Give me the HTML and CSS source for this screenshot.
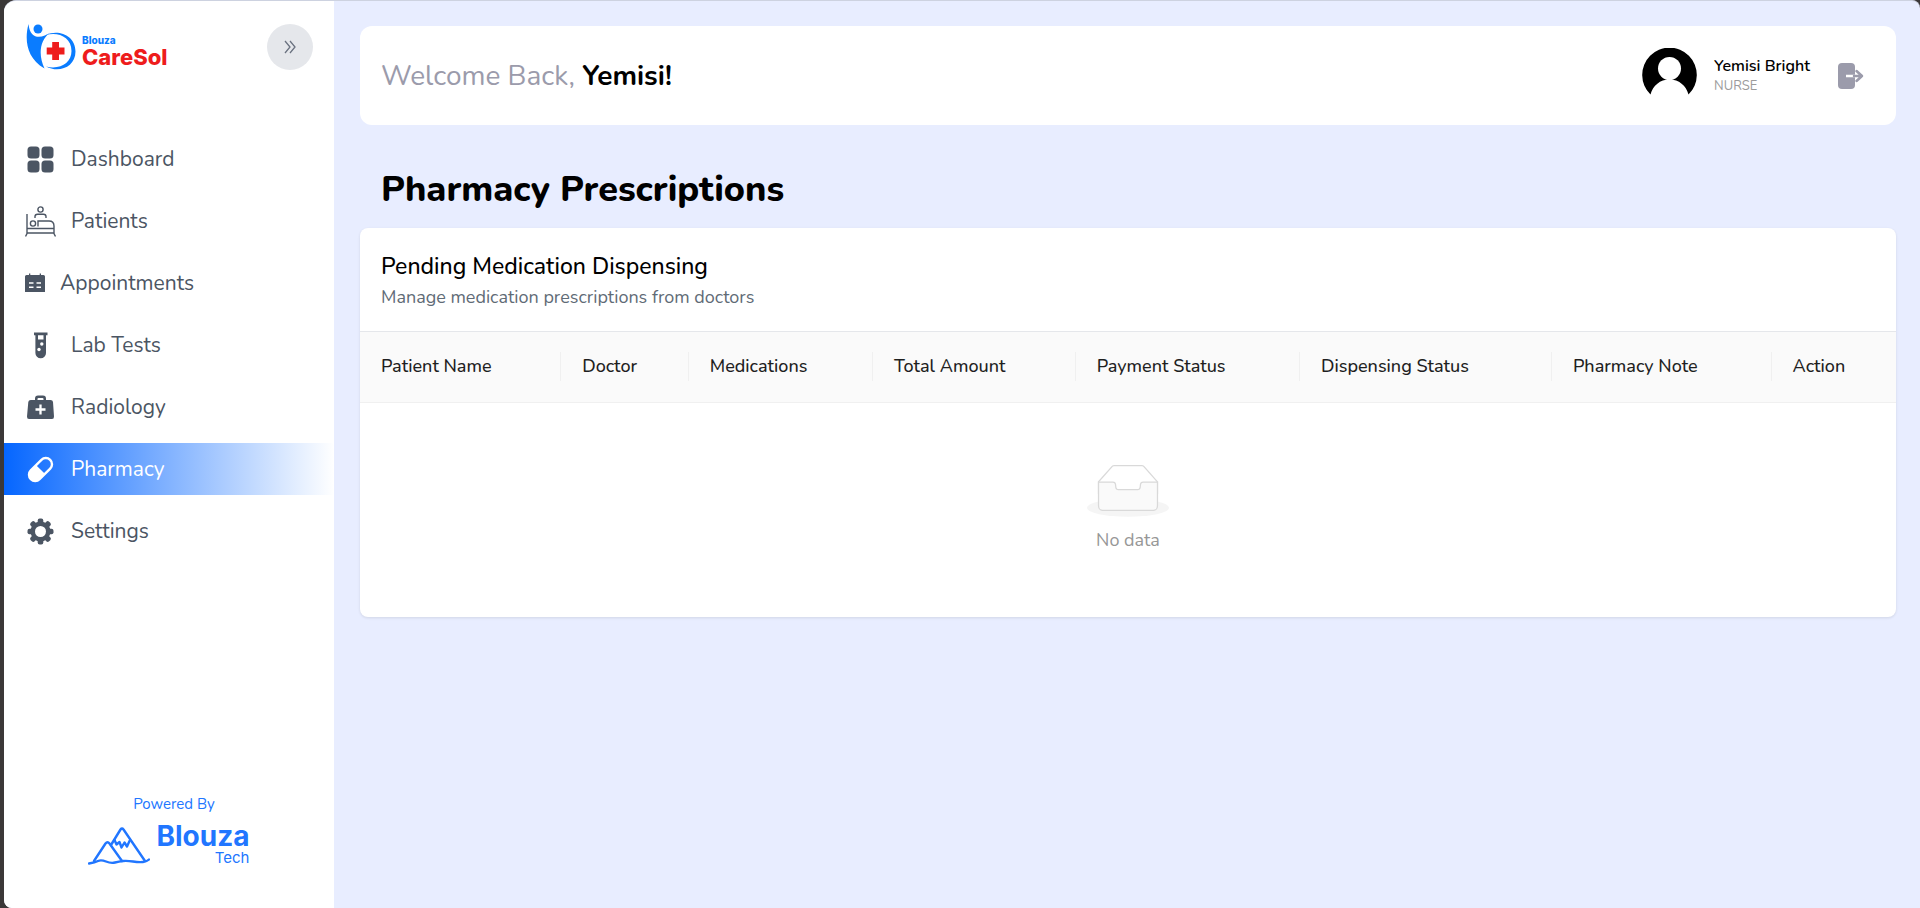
FILE: index.html
```
<!DOCTYPE html>
<html lang="en">
<head>
  <meta charset="UTF-8" />
  <meta name="viewport" content="width=device-width, initial-scale=1.0" />
  <title>Pharmacy | Blouza CareSol</title>
  <link rel="stylesheet" href="styles.css">
</head>
<body>
  <div class="app">

    <aside class="sidebar">
      <div class="sidebar-top">
        <a class="brand" href="#">
          <svg class="brand-icon" viewBox="0 0 50 46">
            <circle cx="12" cy="5" r="4.500" fill="#0a7cff"/>
            <path fill="#0a7cff" d="M2.500 0C-1.500 15 0 34 18.500 44.500C12.500 32 13 17 24 8.500C17 14 4 17 2.500 0Z"/>
            <path fill="#0a7cff" d="M20 11C32 5 49.500 11 49.500 27.500C49.500 43 33 49.500 20 42.500C34 46 45.500 39 45.500 27C45.500 13 32 7.500 20 11Z"/>
            <path fill="#ee1c1c" d="M26.200 18h6.800v5.600h5.500v6.800h-5.500v5.600h-6.800v-5.600h-5.500v-6.800h5.500z"/>
          </svg>
          <span class="brand-text">
            <span class="brand-small">Blouza</span>
            <span class="brand-big">CareSol</span>
          </span>
        </a>
        <button class="collapse-btn" type="button" aria-label="Toggle sidebar">
          <svg width="12" height="14" viewBox="0 0 12 14" fill="none" stroke="#6b7280" stroke-width="1.300">
            <path d="M1 1l5 6-5 6M6 1l5 6-5 6"/>
          </svg>
        </button>
      </div>

      <nav class="nav">
        <a class="nav-item" href="#">
          <svg class="nav-icon" viewBox="0 0 31 31" fill="currentColor">
            <rect x="2.500" y="2.500" width="12" height="12" rx="3.500"/>
            <rect x="16.500" y="2.500" width="12" height="12" rx="3.500"/>
            <rect x="2.500" y="16.500" width="12" height="12" rx="3.500"/>
            <rect x="16.500" y="16.500" width="12" height="12" rx="3.500"/>
          </svg>
          <span>Dashboard</span>
        </a>
        <a class="nav-item" href="#">
          <svg class="nav-icon" viewBox="0 0 31 31" fill="none" stroke="currentColor" stroke-width="1.400">
            <circle cx="15.500" cy="3.500" r="2.600"/>
            <path d="M10 12V10.500C10 8.800 11 8.300 12.500 8.300h6c1.500 0 2.500.5 2.500 2.200V12"/>
            <circle cx="8" cy="17.500" r="2.600"/>
            <path d="M13 20.500v-5.500h11c3.500 0 5 2 5 5v7.500l1.500 3"/>
            <path d="M2 8v19.500L.5 30.500M2 22.500h27M2 27h27"/>
          </svg>
          <span>Patients</span>
        </a>
        <a class="nav-item" href="#">
          <svg class="nav-icon nav-icon-sm" viewBox="0 0 20 20">
            <path fill="currentColor" d="M4 .5h1.300V2h9.400V.5H16V2h2.500Q20 2 20 3.500V19H0V3.500Q0 2 1.500 2H4z"/>
            <path stroke="#fff" stroke-width="1.500" d="M4 10h4.500M11.500 10H16M4 14.300h4.500M11.500 14.300H16"/>
          </svg>
          <span>Appointments</span>
        </a>
        <a class="nav-item" href="#">
          <svg class="nav-icon" viewBox="0 0 31 31">
            <path fill="currentColor" fill-rule="evenodd" d="M9 2.500h13.500v2.700H21V23a5.300 5.300 0 0 1-10.600 0V5.200H9zM13 5.200v4.300h5.500V5.200z"/>
            <circle cx="16.800" cy="14" r="1.700" fill="#fff"/>
            <circle cx="14" cy="19.500" r="1.700" fill="#fff"/>
          </svg>
          <span>Lab Tests</span>
        </a>
        <a class="nav-item" href="#">
          <svg class="nav-icon" viewBox="0 0 31 31">
            <path fill="currentColor" fill-rule="evenodd" d="M10 8V6.500Q10 3.500 13 3.500h5q3 0 3 3V8h4.500q2.300 0 2.500 2l1 14.500q.1 2.500-2 2.500H4q-2.100 0-2-2.500L3.300 10q.2-2 2.500-2zM12.500 8h6V7q0-1-1-1h-4q-1 0-1 1z"/>
            <path stroke="#fff" stroke-width="2.300" d="M15.500 12.500v10M10.500 17.500h10"/>
          </svg>
          <span>Radiology</span>
        </a>
        <a class="nav-item active" href="#">
          <svg class="nav-icon" viewBox="0 0 31 31">
            <g transform="rotate(45 15.500 15.500)">
              <rect x="9.300" y="1.800" width="12.400" height="27.400" rx="6.200" fill="none" stroke="currentColor" stroke-width="2.400"/>
              <path fill="currentColor" d="M9 15.500h13v7a6.500 6.500 0 0 1-13 0z"/>
            </g>
          </svg>
          <span>Pharmacy</span>
        </a>
        <a class="nav-item" href="#">
          <svg class="nav-icon" viewBox="0 0 31 31">
            <g fill="currentColor">
              <rect x="12.700" y="2.500" width="5.600" height="26" rx="2"/>
              <rect x="12.700" y="2.500" width="5.600" height="26" rx="2" transform="rotate(45 15.500 15.500)"/>
              <rect x="12.700" y="2.500" width="5.600" height="26" rx="2" transform="rotate(90 15.500 15.500)"/>
              <rect x="12.700" y="2.500" width="5.600" height="26" rx="2" transform="rotate(135 15.500 15.500)"/>
              <circle cx="15.500" cy="15.500" r="10"/>
            </g>
            <circle cx="15.500" cy="15.500" r="5.500" fill="#fff"/>
          </svg>
          <span>Settings</span>
        </a>
      </nav>

      <div class="sidebar-footer">
        <p class="powered">Powered By</p>
        <a class="tech" href="#">
          <svg class="tech-icon" viewBox="0 0 62 38" fill="none" stroke="currentColor" stroke-width="2.400" stroke-linecap="round" stroke-linejoin="round">
            <path d="M1 36.500Q7 35.500 10 34t8 .5 9 1 8-1.500 10 .5 10 .5 6-2.500"/>
            <path d="M6 34L17.500 16.500q2-2.500 4 0L34 34"/>
            <path d="M23 18L32.500 2.500q1.500-2 3 0L57 34"/>
            <path d="M26.500 13l2 4.500 3-2.500 2 5.500 3-5 2.500 4 2.500-5.500"/>
          </svg>
          <span class="tech-text">
            <span class="tech-big">Blouza</span>
            <span class="tech-small">Tech</span>
          </span>
        </a>
      </div>
    </aside>

    <main class="main">
      <header class="topbar">
        <p class="welcome">Welcome Back, <strong>Yemisi!</strong></p>
        <div class="user">
          <svg class="avatar" viewBox="0 0 55 55">
            <path d="M8.500 46.500A27.300 27.300 0 1 1 46.500 46.500C44 37.500 37 31.500 27.500 31.500S11 37.500 8.500 46.500Z"/>
            <circle cx="27.500" cy="20.500" r="11.500" fill="#fff"/>
          </svg>
          <div class="user-info">
            <span class="user-name">Yemisi Bright</span>
            <span class="user-role">NURSE</span>
          </div>
          <button class="logout-btn" type="button" aria-label="Log out">
            <svg width="26" height="28" viewBox="0 0 26 28">
              <rect x="0" y="1" width="17" height="26" rx="4" fill="#9b9bab"/>
              <path d="M8 14h9" stroke="#fff" stroke-width="2.500"/>
              <path d="M16 14h8M18.500 9l5.500 5-5.500 5" fill="none" stroke="#9b9bab" stroke-width="2.500" stroke-linecap="round" stroke-linejoin="round"/>
            </svg>
          </button>
        </div>
      </header>

      <h1>Pharmacy Prescriptions</h1>

      <section class="card">
        <div class="card-head">
          <h2>Pending Medication Dispensing</h2>
          <p>Manage medication prescriptions from doctors</p>
        </div>
        <table class="table">
          <colgroup>
            <col class="col-patient">
            <col class="col-doctor">
            <col class="col-meds">
            <col class="col-amount">
            <col class="col-payment">
            <col class="col-dispensing">
            <col class="col-note">
            <col class="col-action">
          </colgroup>
          <thead>
            <tr>
              <th>Patient Name</th>
              <th>Doctor</th>
              <th>Medications</th>
              <th>Total Amount</th>
              <th>Payment Status</th>
              <th>Dispensing Status</th>
              <th>Pharmacy Note</th>
              <th>Action</th>
            </tr>
          </thead>
          <tbody>
            <tr>
              <td colspan="8" class="empty">
                <svg width="82" height="53" viewBox="0 0 64 41">
                  <g transform="translate(0 1)" fill="none" fill-rule="evenodd">
                    <ellipse fill="#f5f5f5" cx="32" cy="33" rx="32" ry="7"/>
                    <g stroke="#d9d9d9">
                      <path d="M55 12.760L44.854 1.258C44.367.474 43.656 0 42.907 0H21.093c-.749 0-1.460.474-1.947 1.257L9 12.761V22h46v-9.240z"/>
                      <path fill="#fafafa" d="M41.613 15.931c0-1.605.994-2.930 2.227-2.931H55v18.137C55 33.260 53.680 35 52.050 35h-40.100C10.320 35 9 33.259 9 31.137V13h11.160c1.233 0 2.227 1.323 2.227 2.928v.022c0 1.605 1.005 2.901 2.237 2.901h14.752c1.232 0 2.237-1.308 2.237-2.913v-.007z"/>
                    </g>
                  </g>
                </svg>
                <p>No data</p>
              </td>
            </tr>
          </tbody>
        </table>
      </section>
    </main>

  </div>
</body>
</html>
```
FILE: styles.css
```
* {
  box-sizing: border-box;
}
body {
  margin: 0;
  padding: 0 0 0 4px;
  background: #3b3838;
  font-family: Nunito, Lato, "Open Sans", sans-serif;
  color: #000;
}
h1, h2, p {
  margin: 0;
}
a {
  text-decoration: none;
}
button {
  border: none;
  padding: 0;
  cursor: pointer;
}
.app {
  display: flex;
  min-height: 100vh;
  background: #e8edff;
  border-top: 1px solid #cdd2e0;
  border-radius: 12px 8px 0 8px;
  overflow: hidden;
}

/* sidebar */
.sidebar {
  display: flex;
  flex-direction: column;
  flex: 0 0 330px;
  background: #fff;
}
.sidebar-top {
  display: flex;
  justify-content: space-between;
  align-items: center;
  padding: 23px 21px 0 22px;
}
.brand {
  display: flex;
  align-items: center;
  gap: 6px;
}
.brand-icon {
  width: 50px;
  height: 46px;
}
.brand-text {
  display: flex;
  flex-direction: column;
  font-family: Inter, sans-serif;
  padding-top: 8px;
}
.brand-small {
  font-size: 10px;
  line-height: 11px;
  font-weight: 800;
  color: #0a7cff;
}
.brand-big {
  font-size: 22px;
  line-height: 22px;
  font-weight: 800;
  color: #ee1c1c;
}
.collapse-btn {
  display: flex;
  align-items: center;
  justify-content: center;
  width: 46px;
  height: 46px;
  border-radius: 50%;
  background: #e5e7eb;
}
.nav {
  display: flex;
  flex-direction: column;
  gap: 10px;
  margin-top: 63px;
}
.nav-item {
  display: flex;
  align-items: center;
  gap: 15px;
  height: 52px;
  padding-left: 21px;
  font-size: 21px;
  color: #4b5563;
}
.nav-item.active {
  color: #fff;
  background: linear-gradient(to right, #0566ff, #fff);
}
.nav-icon {
  width: 31px;
  height: 31px;
}
.nav-icon-sm {
  width: 20px;
  height: 20px;
}
.sidebar-footer {
  display: flex;
  flex-direction: column;
  align-items: center;
  gap: 8px;
  margin-top: auto;
  padding-bottom: 43px;
  color: #2176ff;
}
.powered {
  padding-left: 10px;
  font-size: 15px;
  line-height: 20px;
}
.tech {
  display: flex;
  align-items: flex-end;
  gap: 6px;
  color: #2176ff;
}
.tech-icon {
  width: 62px;
  height: 38px;
}
.tech-text {
  display: flex;
  flex-direction: column;
  align-items: flex-end;
  font-family: Inter, sans-serif;
}
.tech-big {
  font-size: 28px;
  line-height: 28px;
  font-weight: 700;
}
.tech-small {
  font-size: 15px;
  line-height: 15px;
}

/* content */
.main {
  flex: 1;
  min-width: 0;
  padding: 25px 24px 25px 26px;
}
.topbar {
  display: flex;
  justify-content: space-between;
  align-items: center;
  height: 99px;
  padding: 0 32px 0 21px;
  background: #fff;
  border-radius: 12px;
}
.welcome {
  font-size: 28px;
  color: #9b9bab;
}
.welcome strong {
  font-weight: 700;
  color: #000;
}
.user {
  display: flex;
  align-items: center;
}
.avatar {
  width: 55px;
  height: 55px;
}
.user-info {
  display: flex;
  flex-direction: column;
  margin: 0 28px 0 17px;
}
.user-name {
  font-size: 16px;
  line-height: 20px;
  font-weight: 600;
}
.user-role {
  font-size: 13px;
  line-height: 20px;
  color: #9b9b9b;
}
.logout-btn {
  display: flex;
  background: none;
}
h1 {
  margin: 41px 0 14px 21px;
  font-size: 36px;
  line-height: 48px;
  font-weight: 800;
}
.card {
  background: #fff;
  border-radius: 8px;
  box-shadow: 0 1px 3px rgba(0, 0, 0, 0.1);
  overflow: hidden;
}
.card-head {
  padding: 21px 21px 21px;
  border-bottom: 1px solid #e5e7eb;
}
.card-head h2 {
  font-size: 23px;
  line-height: 35px;
  font-weight: 500;
}
.card-head p {
  font-size: 18px;
  line-height: 26px;
  color: #5f6b76;
}
.table {
  width: 100%;
  table-layout: fixed;
  border-collapse: separate;
  border-spacing: 0;
}
.col-patient { width: 13.1%; }
.col-doctor { width: 8.3%; }
.col-meds { width: 12%; }
.col-amount { width: 13.2%; }
.col-payment { width: 14.6%; }
.col-dispensing { width: 16.4%; }
.col-note { width: 14.3%; }
.col-action { width: 8.1%; }
.table th {
  position: relative;
  height: 71px;
  padding: 0 21px 2px;
  text-align: left;
  font-size: 18px;
  font-weight: 500;
  color: #1f1f1f;
  background: #fafafa;
  border-bottom: 1px solid #f0f0f0;
  white-space: nowrap;
}
.table th:not(:last-child)::after {
  content: "";
  position: absolute;
  top: 20px;
  right: 0;
  width: 1px;
  height: 29px;
  background: #f0f0f0;
}
.empty {
  height: 214px;
  padding: 0 0 3px;
  text-align: center;
}
.empty svg {
  display: block;
  margin: 0 auto 9px;
}
.empty p {
  font-size: 18px;
  line-height: 28px;
  color: #979797;
}
```
